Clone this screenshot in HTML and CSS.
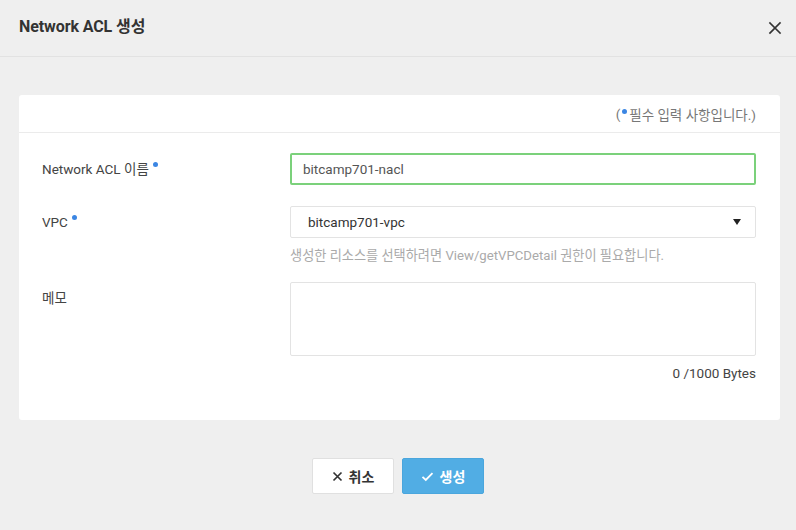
FILE: index.html
```html
<!DOCTYPE html>
<html lang="ko">
<head>
<meta charset="utf-8">
<title>Network ACL 생성</title>
<link rel="stylesheet" href="styles.css">
</head>
<body>
<div class="header">
  <h1 class="title">Network ACL 생성</h1>
  <button class="close" aria-label="닫기">
    <svg width="14" height="14" viewBox="0 0 14 14"><path d="M2 2L12 12M12 2L2 12" stroke="#333" stroke-width="1.7" stroke-linecap="square"/></svg>
  </button>
</div>
<div class="card">
  <div class="card-top">(<span class="dot dot-inline"></span>필수 입력 사항입니다.)</div>
  <div class="form">
    <div class="row">
      <div class="label">Network ACL 이름<span class="dot"></span></div>
      <div class="field">
        <div class="input active">bitcamp701-nacl</div>
      </div>
    </div>
    <div class="row">
      <div class="label">VPC<span class="dot"></span></div>
      <div class="field">
        <div class="input select"><span>bitcamp701-vpc</span><span class="caret"></span></div>
        <div class="help">생성한 리소스를 선택하려면 View/getVPCDetail 권한이 필요합니다.</div>
      </div>
    </div>
    <div class="row">
      <div class="label">메모</div>
      <div class="field">
        <div class="textarea"></div>
        <div class="counter">0 /1000 Bytes</div>
      </div>
    </div>
  </div>
</div>
<div class="buttons">
  <button class="btn btn-cancel">
    <svg width="11" height="11" viewBox="0 0 11 11"><path d="M1.5 1.5L9.5 9.5M9.5 1.5L1.5 9.5" stroke="#333" stroke-width="1.7"/></svg>
    <span>취소</span>
  </button>
  <button class="btn btn-ok">
    <svg width="13" height="11" viewBox="0 0 13 11"><path d="M1.5 5.8L4.8 9L11.5 2.2" fill="none" stroke="#fff" stroke-width="1.8"/></svg>
    <span>생성</span>
  </button>
</div>
</body>
</html>
```
FILE: styles.css
```css
* { box-sizing: border-box; }
html, body { margin: 0; padding: 0; }
body {
  width: 796px;
  height: 530px;
  background: #efefef;
  font-family: "Roboto", "Noto Sans CJK KR", sans-serif;
  color: #444;
  overflow: hidden;
}
.header {
  height: 57px;
  border-bottom: 1px solid #e2e2e2;
  display: flex;
  align-items: center;
  justify-content: space-between;
  padding: 0 14px 0 19px;
}
.title {
  margin: 0 0 6px 0;
  font-size: 16px;
  font-weight: 700;
  color: #333;
  letter-spacing: -0.1px;
}
.close {
  border: 0;
  background: none;
  padding: 0;
  width: 14px;
  height: 14px;
  display: flex;
}
.card {
  margin: 38px 16px 0 19px;
  background: #fff;
  border-radius: 3px;
  padding-bottom: 38px;
}
.card-top {
  height: 38px;
  border-bottom: 1px solid #ebebeb;
  display: flex;
  align-items: center;
  justify-content: flex-end;
  padding: 0 24px 0 0;
  font-size: 13.5px;
  color: #777;
}
.dot {
  display: inline-block;
  width: 5px;
  height: 5px;
  border-radius: 50%;
  background: #3b86e3;
  vertical-align: top;
  margin: 9px 0 0 4px;
}
.dot-inline {
  margin: -5px 2px 0 2px;
  vertical-align: middle;
}
.form {
  padding: 20px 24px 0 23px;
}
.row {
  display: flex;
  margin-bottom: 21px;
}
.row:nth-child(2) { margin-bottom: 17px; }
.row:last-child { margin-bottom: 0; }
.label {
  width: 248px;
  flex: none;
  font-size: 13.5px;
  line-height: 32px;
  color: #444;
}
.field {
  flex: 1;
}
.input {
  height: 32px;
  border: 1px solid #e3e3e3;
  border-radius: 2px;
  font-size: 13.5px;
  color: #555;
  display: flex;
  align-items: center;
  padding: 0 12px;
}
.input.active {
  border: 2px solid #7bd17b;
  padding: 0 11px;
}
.select {
  justify-content: space-between;
  padding: 0 14px 0 17px;
  color: #333;
}
.caret {
  width: 0;
  height: 0;
  border-left: 4.5px solid transparent;
  border-right: 4.5px solid transparent;
  border-top: 6px solid #222;
}
.help {
  margin-top: 9px;
  font-size: 13.2px;
  line-height: 18px;
  color: #aaa;
}
.textarea {
  height: 74px;
  border: 1px solid #e3e3e3;
  border-radius: 2px;
}
.counter {
  margin-top: 8px;
  text-align: right;
  font-size: 13.5px;
  line-height: 18px;
  color: #444;
}
.buttons {
  display: flex;
  justify-content: center;
  gap: 8px;
  margin-top: 38px;
}
.btn {
  width: 82px;
  height: 36px;
  border-radius: 2px;
  display: flex;
  align-items: center;
  justify-content: center;
  gap: 6px;
  font-family: "Roboto", "Noto Sans CJK KR", sans-serif;
  font-size: 14px;
  font-weight: 700;
  padding: 0;
}
.btn-cancel {
  background: #fff;
  border: 1px solid #e0e0e0;
  color: #333;
}
.btn-ok {
  background: #51ade4;
  border: 1px solid #4aa6dd;
  color: #fff;
}
```
